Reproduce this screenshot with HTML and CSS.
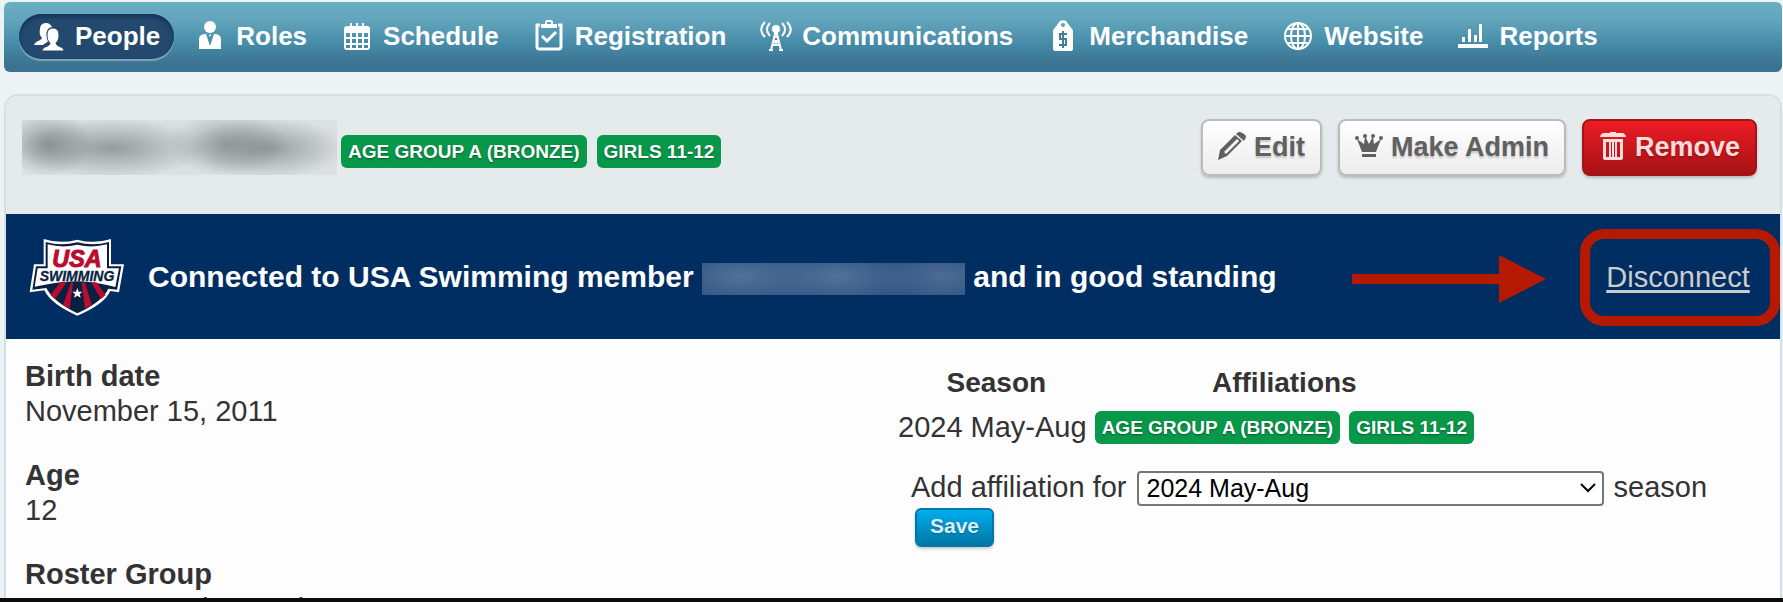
FILE: index.html
```html
<!DOCTYPE html>
<html lang="en">
<head>
    <meta charset="UTF-8">
    <meta name="viewport" content="width=device-width, initial-scale=1.0">
    <title>People</title>
    <link rel="stylesheet" href="styles.css">
</head>
<body>
    <nav class="nav">
        <a class="nav-item active" href="#">
            <svg class="nav-icon" viewBox="0 0 32 32">
                <path d="M1 25c1-4 7-4 8-7-2-2-3-5-2-9 0-4 3-6 6-6s5 2 6 4c-5 1-6 5-5 9 0 3 1 4 1 5-1 2-3 2-5 4z"/>
                <path d="M9 31c0-5 8-4 8-8-2-2-3-4-3-8 0-5 3-7 6-7s6 2 6 7c0 4-1 6-3 8 0 4 8 3 8 8z" stroke="#24496f" stroke-width="1"/>
            </svg>
            People
        </a>
        <a class="nav-item" href="#">
            <svg class="nav-icon" viewBox="0 0 32 32">
                <circle cx="16" cy="7" r="6"/>
                <path d="M5 29V19c0-4 4-5 7-5l4 12 0-9-1-2 1-1 1 1-1 2 0 9 4-12c3 0 7 1 7 5v10z"/>
            </svg>
            Roles
        </a>
        <a class="nav-item" href="#">
            <svg class="nav-icon" viewBox="0 0 32 32">
                <path fill-rule="evenodd" d="M6 6h3V3h2v3h4V3h2v3h4V3h2v3h3c2 0 3 1 3 3v18c0 2-1 3-3 3H6c-2 0-3-1-3-3V9c0-2 1-3 3-3zM5 13v4h4v-4zm6 0v4h4v-4zm6 0v4h4v-4zm6 0v4h4v-4zM5 19v4h4v-4zm6 0v4h4v-4zm6 0v4h4v-4zm6 0v4h4v-4zM5 25v3h4v-3zm6 0v3h4v-3zm6 0v3h4v-3zm6 0v3h4v-3z"/>
            </svg>
            Schedule
        </a>
        <a class="nav-item" href="#">
            <svg class="nav-icon" viewBox="0 0 32 32">
                <path d="M7 5H4v22c0 1 1 2 2 2h20c1 0 2-1 2-2V5h-3" fill="none" stroke="#fff" stroke-width="3"/>
                <path fill-rule="evenodd" d="M8 4h4V2c0-1 1-2 2-2h4c1 0 2 1 2 2v2h4v4H8zm6-2v2h4V2z"/>
                <path d="M9 16l5 5 9-9" fill="none" stroke="#fff" stroke-width="3"/>
            </svg>
            Registration
        </a>
        <a class="nav-item" href="#">
            <svg class="nav-icon" viewBox="0 0 32 32">
                <circle cx="16" cy="9" r="4"/>
                <path d="M16 10l-5 20M16 10l5 20M14 17h4M13 21h6M12 25h8M9 30h4M19 30h4M13 25l6-4M19 25l-6-4" fill="none" stroke="#fff" stroke-width="2"/>
                <path d="M10 3c-4 4-4 9 0 13M5 2c-5 5-5 10 0 15M22 3c4 4 4 9 0 13M27 2c5 5 5 10 0 15" fill="none" stroke="#fff" stroke-width="2"/>
            </svg>
            Communications
        </a>
        <a class="nav-item" href="#">
            <svg class="nav-icon" viewBox="0 0 32 32">
                <path fill-rule="evenodd" d="M13 1c2-1 4-1 6 0l6 8c1 1 1 2 1 3v17c0 1-1 2-2 2H8c-1 0-2-1-2-2V12c0-1 0-2 1-3zM16 3a2 2 0 100 4 2 2 0 000-4z"/>
                <path d="M20 14h-7v5h6v6h-7M16 11v17" fill="none" stroke="#3f7f9d" stroke-width="2"/>
            </svg>
            Merchandise
        </a>
        <a class="nav-item" href="#">
            <svg class="nav-icon" viewBox="0 0 32 32">
                <g fill="none" stroke="#fff" stroke-width="2">
                    <circle cx="16" cy="16" r="13"/>
                    <ellipse cx="16" cy="16" rx="7" ry="13"/>
                    <path d="M16 3v26M3 16h26M5 9h22M5 23h22"/>
                </g>
            </svg>
            Website
        </a>
        <a class="nav-item" href="#">
            <svg class="nav-icon" viewBox="0 0 32 32">
                <path d="M1 24h30v4H1zM5 17h3v5H5zM11 9h3v13h-3zM17 15h3v7h-3zM22 4h3v18h-3z"/>
            </svg>
            Reports
        </a>
    </nav>

    <main class="panel">
        <header class="panel-header">
            <div class="member-name"></div>
            <div class="badges header-badges">
                <span class="badge">AGE GROUP A (BRONZE)</span>
                <span class="badge">GIRLS 11-12</span>
            </div>
            <div class="actions">
                <button type="button" class="btn">
                    <svg class="btn-icon" viewBox="0 0 28 28">
                        <path fill-rule="evenodd" d="M0 28l2-10L17 3l7 6L9 24zM6 20l2 2L21 9l-2-2z"/>
                        <path d="M18 2c3-3 5-2 8 0s2 4 0 7z"/>
                    </svg>
                    Edit
                </button>
                <button type="button" class="btn">
                    <svg class="btn-icon" viewBox="0 0 28 28">
                        <path d="M7 20L2 7l7 5 1-8 4 8 4-8 1 8 7-5-5 13zM7 22h14v3H7z"/>
                        <circle cx="2" cy="6" r="2"/><circle cx="10" cy="4" r="2"/><circle cx="18" cy="4" r="2"/><circle cx="26" cy="6" r="2"/>
                    </svg>
                    Make Admin
                </button>
                <button type="button" class="btn btn-danger">
                    <svg class="btn-icon" viewBox="0 0 28 28">
                        <path d="M1 5c0-2 2-4 4-4h6V0h6v1h6c2 0 4 2 4 4z"/>
                        <path fill-rule="evenodd" d="M4 7h20v19c0 1-1 2-2 2H6c-1 0-2-1-2-2zm3 3v15h3V10zm5 0v15h1V10zm3 0v15h1V10zm3 0v15h3V10z"/>
                    </svg>
                    Remove
                </button>
            </div>
        </header>

        <section class="banner">
            <svg class="logo" viewBox="14 12 288 240" role="img" aria-label="USA Swimming">
                <path d="M58 18Q108 34 159 20Q210 34 260 18V94H299L284 178L258 174Q240 214 159 248Q80 214 60 172L16 178L29 94H58Z" fill="#fff"/>
                <path d="M64 27Q110 40 159 28Q208 40 254 27V100H291L278 170L252 167Q234 206 159 241Q86 206 66 165L24 170L35 100H64Z" fill="#0b1f41"/>
                <path d="M70 34Q115 46 159 35Q203 46 248 34V106H284L273 162L248 156Q159 134 70 154L31 161L40 106H70Z" fill="#fff"/>
                <path d="M108 148l-30 38 14 12 35-50zM140 149l-24 66 20 12 10-78zM172 149l10 78 20-12-20-66zM200 148l30 50 14-12-28-38z" fill="#ba0c2f"/>
                <path d="M159 165l4 11h11l-8 7 3 11-10-6-10 6 3-11-8-7h11z" fill="#fff"/>
                <text class="logo-usa" x="158" y="103">USA</text>
                <text class="logo-swim" x="158" y="143">SWIMMING</text>
            </svg>
            <p class="banner-text">Connected to USA Swimming member <span class="member-id"></span> and in good standing</p>
            <svg class="arrow" viewBox="0 0 194 48">
                <path d="M0 19h147V0l47 24-47 24V29H0z"/>
            </svg>
            <div class="highlight"><a class="disconnect" href="#">Disconnect</a></div>
        </section>

        <section class="details">
            <dl class="info">
                <dt>Birth date</dt>
                <dd>November 15, 2011</dd>
                <dt>Age</dt>
                <dd>12</dd>
                <dt>Roster Group</dt>
                <dd>Age Group A (Bronze)</dd>
            </dl>
            <div class="affiliations">
                <table class="seasons">
                    <thead>
                        <tr><th>Season</th><th>Affiliations</th></tr>
                    </thead>
                    <tbody>
                        <tr>
                            <td>2024 May-Aug</td>
                            <td>
                                <div class="badges">
                                    <span class="badge">AGE GROUP A (BRONZE)</span>
                                    <span class="badge">GIRLS 11-12</span>
                                </div>
                            </td>
                        </tr>
                    </tbody>
                </table>
                <form class="add-form">
                    <label for="season">Add affiliation for</label>
                    <div class="select-wrap">
                        <select id="season">
                            <option>2024 May-Aug</option>
                        </select>
                        <svg class="chevron" viewBox="0 0 16 10"><path d="M1 1l7 7 7-7"/></svg>
                    </div>
                    <span>season</span>
                    <button type="submit" class="btn-save">Save</button>
                </form>
            </div>
        </section>
    </main>
</body>
</html>
```

FILE: styles.css
```css
* {
    box-sizing: border-box;
}
body {
    display: flex;
    flex-direction: column;
    height: 100vh;
    margin: 0;
    padding: 2px 1px 0 4px;
    overflow: hidden;
    background: #ebf3f5;
    border-bottom: 4px solid #0c0c0c;
    color: #333;
    font-family: "Liberation Sans", Arial, sans-serif;
    font-size: 29px;
    line-height: 35px;
}

/* Navigation */
.nav {
    display: flex;
    flex: none;
    align-items: flex-start;
    gap: 6px;
    height: 70px;
    padding: 12px 15px;
    border-radius: 6px;
    background: linear-gradient(#69afc2, #62a5bc 25%, #468ba8 60%, #3b7290 90%, #3b7192);
}
.nav-item {
    display: flex;
    align-items: center;
    gap: 10px;
    height: 45px;
    padding: 0 14px 1px;
    border-radius: 23px;
    color: #fff;
    font-size: 26px;
    font-weight: bold;
    text-decoration: none;
    white-space: nowrap;
}
.nav-item.active {
    background: #24496f;
    box-shadow: inset 0 3px 4px #123555, 0 2px 1px rgba(255, 255, 255, 0.35);
}
.nav-icon {
    width: 32px;
    height: 32px;
    fill: #fff;
}

/* Panel */
.panel {
    flex: 1;
    margin-top: 22px;
    overflow: hidden;
    border: 2px solid #d3e1e6;
    border-bottom: 0;
    border-radius: 14px 14px 0 0;
    background: #fdfdfd;
}
.panel-header {
    display: flex;
    align-items: flex-start;
    height: 118px;
    padding: 23px 23px 0 16px;
    background: #e5eaed;
}
.member-name {
    width: 315px;
    height: 55px;
    margin-top: 1px;
    background:
        radial-gradient(ellipse 45px 32px at 26px 24px, rgba(115, 120, 122, 0.7), transparent),
        radial-gradient(ellipse 95px 30px at 90px 28px, rgba(120, 125, 127, 0.7), transparent),
        radial-gradient(ellipse 60px 32px at 205px 24px, rgba(120, 125, 127, 0.6), transparent),
        radial-gradient(ellipse 80px 30px at 245px 28px, rgba(120, 125, 127, 0.7), transparent),
        #dbe0e2;
}
.badges {
    display: flex;
    gap: 9px;
}
.header-badges {
    gap: 10px;
    margin: 16px 0 0 4px;
}
.badge {
    padding: 0 7px;
    border-radius: 6px;
    background: #079849;
    color: #fff;
    font-size: 19px;
    font-weight: bold;
    line-height: 33px;
    text-shadow: 0 1px 2px rgba(0, 0, 0, 0.4);
    white-space: nowrap;
}
.actions {
    display: flex;
    gap: 16px;
    margin-left: auto;
}
.btn {
    display: flex;
    align-items: center;
    gap: 8px;
    height: 57px;
    padding: 0 15px;
    border: 2px solid #bbb;
    border-radius: 8px;
    background: linear-gradient(#fff, #ececec);
    box-shadow: 0 2px 3px rgba(0, 0, 0, 0.2);
    color: #606060;
    font: bold 27px "Liberation Sans", Arial, sans-serif;
    text-shadow: 0 2px 2px rgba(0, 0, 0, 0.2);
    cursor: pointer;
}
.btn-danger {
    border-color: #a31418;
    background: linear-gradient(#ed1c24, #a61216);
    color: #fcdcdd;
}
.btn-icon {
    width: 28px;
    height: 28px;
    margin-bottom: 3px;
    fill: currentColor;
}

/* USA Swimming banner */
.banner {
    display: flex;
    align-items: center;
    height: 125px;
    padding-top: 1px;
    padding-left: 23px;
    background: #002e62;
    color: #fff;
}
.logo {
    flex: none;
    width: 96px;
    height: 80px;
}
.logo text {
    font-family: "Liberation Sans", Arial, sans-serif;
    font-weight: bold;
    font-style: italic;
    text-anchor: middle;
}
.logo-usa {
    fill: #ba0c2f;
    stroke: #ba0c2f;
    stroke-width: 3;
    font-size: 70px;
}
.logo-swim {
    fill: #0b1f41;
    stroke: #0b1f41;
    font-size: 42px;
}
.banner-text {
    margin: 0 0 0 23px;
    font-size: 30px;
    font-weight: bold;
    white-space: nowrap;
}
.member-id {
    display: inline-block;
    width: 263px;
    height: 32px;
    vertical-align: middle;
    background:
        radial-gradient(ellipse 80px 30px at 40px 14px, #527299, transparent),
        radial-gradient(ellipse 80px 30px at 135px 14px, #527299, transparent),
        radial-gradient(ellipse 70px 30px at 240px 14px, #4d6c94, transparent),
        #2b507e;
}
.arrow {
    width: 194px;
    height: 48px;
    margin: 4px 34px 0 auto;
    fill: #b51a00;
}
.highlight {
    display: flex;
    align-items: center;
    justify-content: center;
    width: 200px;
    height: 97px;
    padding-right: 4px;
    border: 10px solid #b51a00;
    border-radius: 24px;
}
.disconnect {
    color: #ccc;
    text-decoration-thickness: 3px;
    text-underline-offset: 3px;
}

/* Member details */
.details {
    display: grid;
    grid-template-columns: 1fr 1fr;
    padding-top: 20px;
}
.info {
    margin: 0;
    padding-left: 19px;
}
.info dt {
    font-weight: bold;
}
.info dd {
    margin: 0 0 29px;
}
.affiliations {
    padding: 6px 20px 0 5px;
}
.seasons {
    border-collapse: collapse;
}
.seasons th {
    padding: 0 0 10px;
    font-size: 28px;
}
.seasons td {
    padding: 0 8px 0 0;
    white-space: nowrap;
}
.seasons td:last-child {
    padding: 0;
}
.add-form {
    display: flex;
    flex-wrap: wrap;
    align-items: center;
    column-gap: 10px;
    row-gap: 2px;
    margin-top: 25px;
    padding-left: 13px;
}
.select-wrap {
    position: relative;
}
.select-wrap select {
    width: 467px;
    height: 35px;
    padding: 0 8px;
    appearance: none;
    border: 2px solid #767676;
    border-radius: 4px;
    background: #fff;
    color: #000;
    font: 25px "Liberation Sans", Arial, sans-serif;
}
.chevron {
    position: absolute;
    top: 13px;
    right: 8px;
    width: 16px;
    height: 10px;
    fill: none;
    stroke: #000;
    stroke-width: 2;
    pointer-events: none;
}
.btn-save {
    height: 39px;
    margin-left: 4px;
    padding: 0 13px 3px;
    border: 2px solid #0077aa;
    border-radius: 6px;
    background: linear-gradient(#00adee, #0078a5);
    box-shadow: 0 2px 3px rgba(0, 0, 0, 0.2);
    color: #d9eef7;
    font: bold 21px "Liberation Sans", Arial, sans-serif;
    text-shadow: 0 1px 2px rgba(0, 0, 0, 0.3);
    cursor: pointer;
}
```
